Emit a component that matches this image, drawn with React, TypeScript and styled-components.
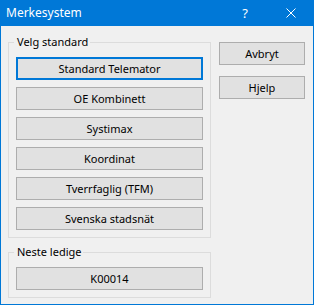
import React from 'react';
import styled, { createGlobalStyle } from 'styled-components';

const GlobalStyle = createGlobalStyle`
  html, body {
    margin: 0;
    padding: 0;
    background: #f0f0f0;
  }
  * {
    box-sizing: border-box;
  }
`;

const Window = styled.div`
  width: 314px;
  height: 305px;
  display: flex;
  flex-direction: column;
  border: 1px solid #0078d7;
  border-top: none;
  background: #f0f0f0;
  font-family: 'Noto Sans', 'Open Sans', sans-serif;
  font-size: 11px;
  color: #000;
`;

const TitleBar = styled.div`
  height: 26px;
  margin: 0 -1px;
  display: flex;
  align-items: center;
  background: #0078d7;
  color: #fff;
`;

const Title = styled.div`
  flex: 1;
  padding-left: 6px;
  font-size: 12px;
  line-height: 16px;
`;

const TitleButton = styled.div`
  width: 46px;
  height: 26px;
  display: flex;
  align-items: center;
  justify-content: center;
  font-size: 13px;
`;

const Body = styled.div`
  flex: 1;
  display: flex;
  gap: 8px;
  padding: 8px 7px 0 7px;
`;

const LeftColumn = styled.div`
  width: 203px;
  display: flex;
  flex-direction: column;
  gap: 6px;
`;

const RightColumn = styled.div`
  width: 86px;
  display: flex;
  flex-direction: column;
  gap: 11px;
  padding-top: 8px;
`;

const GroupBox = styled.fieldset`
  margin: 0;
  padding: 7px;
  min-width: 0;
  border: 1px solid #dcdcdc;
  display: flex;
  flex-direction: column;
  gap: 7px;
`;

const Legend = styled.legend`
  margin-left: -2px;
  padding: 0 2px 0 3px;
  line-height: 16px;
  font-size: 11px;
`;

const Button = styled.button<{ $focused?: boolean }>`
  height: 23px;
  width: 100%;
  padding: 0;
  margin: 0;
  background: #e1e1e1;
  border: ${(p) => (p.$focused ? '2px solid #0078d7' : '1px solid #adadad')};
  font-family: inherit;
  font-size: 11px;
  color: #000;
  display: flex;
  align-items: center;
  justify-content: center;
`;

const standards = [
  'Standard Telemator',
  'OE Kombinett',
  'Systimax',
  'Koordinat',
  'Tverrfaglig (TFM)',
  'Svenska stadsnät',
];

const App = () => {
  return (
    <>
      <GlobalStyle />
      <Window>
        <TitleBar>
          <Title>Merkesystem</Title>
          <TitleButton>?</TitleButton>
          <TitleButton>
            <svg width="10" height="10" viewBox="0 0 10 10">
              <path d="M0.5 0.5 L9.5 9.5 M9.5 0.5 L0.5 9.5" stroke="#fff" strokeWidth="1" />
            </svg>
          </TitleButton>
        </TitleBar>
        <Body>
          <LeftColumn>
            <GroupBox>
              <Legend>Velg standard</Legend>
              {standards.map((name, i) => (
                <Button key={name} $focused={i === 0}>
                  {name}
                </Button>
              ))}
            </GroupBox>
            <GroupBox>
              <Legend>Neste ledige</Legend>
              <Button>K00014</Button>
            </GroupBox>
          </LeftColumn>
          <RightColumn>
            <Button>Avbryt</Button>
            <Button>Hjelp</Button>
          </RightColumn>
        </Body>
      </Window>
    </>
  );
};

export default App;
